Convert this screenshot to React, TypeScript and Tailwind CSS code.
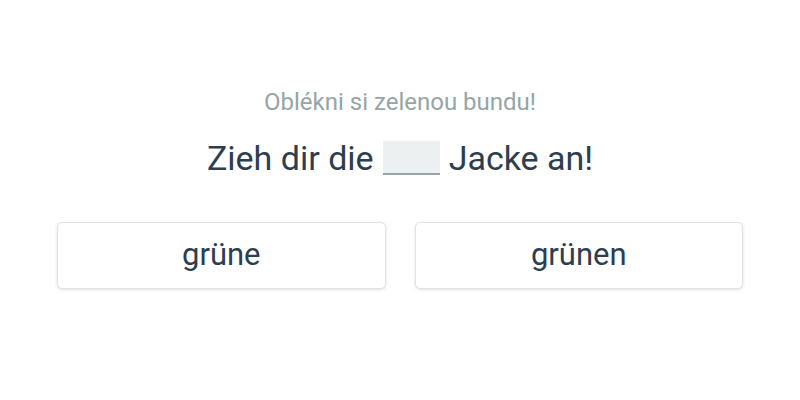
export default function App() {
  return (
    <div className="w-[800px] h-[400px] bg-white flex flex-col items-center" style={{ fontFamily: 'Roboto, "Liberation Sans", sans-serif' }}>
      <div className="mt-[86px] text-[24px] leading-[32px] text-[#95a5a6]">Oblékni si zelenou bundu!</div>
      <div className="mt-[19px] flex items-center text-[34px] leading-[42px] text-[#2c3e50]">
        <span>Zieh dir die</span>
        <span className="mx-[9px] inline-block w-[57px] h-[34px] bg-[#ecf0f1] border-b-2 border-[#95a5a6]"></span>
        <span>Jacke an!</span>
      </div>
      <div className="mt-[43px] w-[686px] grid grid-cols-2 gap-[29px]">
        <button className="h-[67px] rounded-[5px] border border-[#dfe3e4] bg-white shadow-[0_1px_3px_rgba(0,0,0,0.12)] text-[31px] text-[#2c3e50]">grüne</button>
        <button className="h-[67px] rounded-[5px] border border-[#dfe3e4] bg-white shadow-[0_1px_3px_rgba(0,0,0,0.12)] text-[31px] text-[#2c3e50]">grünen</button>
      </div>
    </div>
  );
}
